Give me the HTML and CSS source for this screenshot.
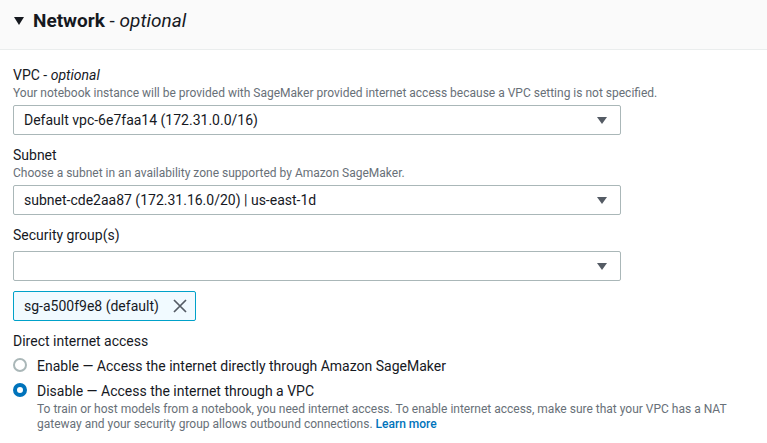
FILE: index.html
```html
<!DOCTYPE html>
<html lang="en">
<head>
<meta charset="utf-8">
<title>Network - optional</title>
<link rel="stylesheet" href="styles.css">
</head>
<body>
<section class="panel">
  <header class="panel-header">
    <svg class="caret" width="10" height="8" viewBox="0 0 10 8"><path d="M0 0 H10 L5 8 Z" fill="#16191f"/></svg>
    <h2 class="panel-title">Network <span class="opt">- <i>optional</i></span></h2>
  </header>
  <div class="panel-body">
    <div class="field">
      <div class="label">VPC <span class="opt">- <i>optional</i></span></div>
      <div class="desc">Your notebook instance will be provided with SageMaker provided internet access because a VPC setting is not specified.</div>
      <div class="select">
        <span class="select-value">Default vpc-6e7faa14 (172.31.0.0/16)</span>
        <svg class="arrow" width="10" height="7" viewBox="0 0 10 7"><path d="M0 0 H10 L5 7 Z" fill="#545b64"/></svg>
      </div>
    </div>
    <div class="field">
      <div class="label">Subnet</div>
      <div class="desc">Choose a subnet in an availability zone supported by Amazon SageMaker.</div>
      <div class="select">
        <span class="select-value">subnet-cde2aa87 (172.31.16.0/20) | us-east-1d</span>
        <svg class="arrow" width="10" height="7" viewBox="0 0 10 7"><path d="M0 0 H10 L5 7 Z" fill="#545b64"/></svg>
      </div>
    </div>
    <div class="field">
      <div class="label">Security group(s)</div>
      <div class="select">
        <span class="select-value"></span>
        <svg class="arrow" width="10" height="7" viewBox="0 0 10 7"><path d="M0 0 H10 L5 7 Z" fill="#545b64"/></svg>
      </div>
      <div class="tokens">
        <div class="token">
          <span class="token-text">sg-a500f9e8 (default)</span>
          <svg class="token-x" width="14" height="14" viewBox="0 0 14 14"><path d="M1 1 L13 13 M13 1 L1 13" stroke="#545b64" stroke-width="1.7" fill="none"/></svg>
        </div>
      </div>
    </div>
    <div class="field">
      <div class="label">Direct internet access</div>
      <div class="radios">
        <div class="radio-row">
          <span class="radio"></span>
          <span class="radio-label">Enable — Access the internet directly through Amazon SageMaker</span>
        </div>
        <div class="radio-row">
          <span class="radio checked"></span>
          <span class="radio-label">Disable — Access the internet through a VPC</span>
        </div>
        <div class="radio-desc">To train or host models from a notebook, you need internet access. To enable internet access, make sure that your VPC has a NAT gateway and your security group allows outbound connections. <a class="link" href="#">Learn more</a></div>
      </div>
    </div>
  </div>
</section>
</body>
</html>
```
FILE: styles.css
```css
* { box-sizing: border-box; }
html, body { margin: 0; padding: 0; background: #ffffff; }
body {
  font-family: Roboto, "Open Sans", "Liberation Sans", sans-serif;
  color: #16191f;
  width: 767px;
  height: 443px;
  overflow: hidden;
}
.panel-header {
  height: 50px;
  background: #fafafa;
  border-bottom: 1px solid #eaeded;
  display: flex;
  align-items: center;
  padding-left: 14px;
  padding-bottom: 8px;
}
.caret { margin-right: 9px; margin-top: 1px; }
.panel-title {
  margin: 0;
  font-size: 19px;
  line-height: 22px;
  font-weight: 700;
  color: #16191f;
}
.opt { font-weight: 400; }
.panel-body { padding: 5px 13px 0 13px; }
.field { margin-top: 10px; }
.label { font-size: 14px; line-height: 21px; color: #16191f; }
.desc { font-size: 12px; line-height: 14px; color: #687078; white-space: nowrap; }
.select {
  margin-top: 5px;
  width: 608px;
  height: 30px;
  border: 1px solid #aab7b8;
  border-radius: 2px;
  display: flex;
  align-items: center;
  padding: 0 13px 0 10px;
  background: #fff;
}
.select-value { flex: 1; font-size: 14px; color: #16191f; }
.arrow { flex: none; }
.tokens { margin-top: 10px; display: flex; }
.token {
  height: 30px;
  display: flex;
  align-items: center;
  background: #f1faff;
  border: 1px solid #00a1c9;
  border-radius: 2px;
  padding: 0 8px 0 10px;
}
.token-text { font-size: 14px; color: #16191f; margin-right: 14px; }
.radios { margin-top: 4px; }
.radio-row {
  display: flex;
  align-items: center;
  height: 21px;
  margin-bottom: 4px;
}
.radio-row + .radio-row { margin-bottom: 0; }
.radio {
  width: 14px;
  height: 14px;
  border-radius: 50%;
  border: 2px solid #aab7b8;
  background: #fff;
  margin-right: 10px;
  flex: none;
  margin-top: -3px;
}
.radio.checked {
  border: 4.5px solid #0073bb;
  background: #fff;
}
.radio-label { font-size: 14px; line-height: 21px; }
.radio-desc {
  width: 754px;
  padding-left: 24px;
  font-size: 12px;
  line-height: 15px;
  color: #687078;
}
.link { color: #0073bb; text-decoration: none; font-weight: 500; }
```
